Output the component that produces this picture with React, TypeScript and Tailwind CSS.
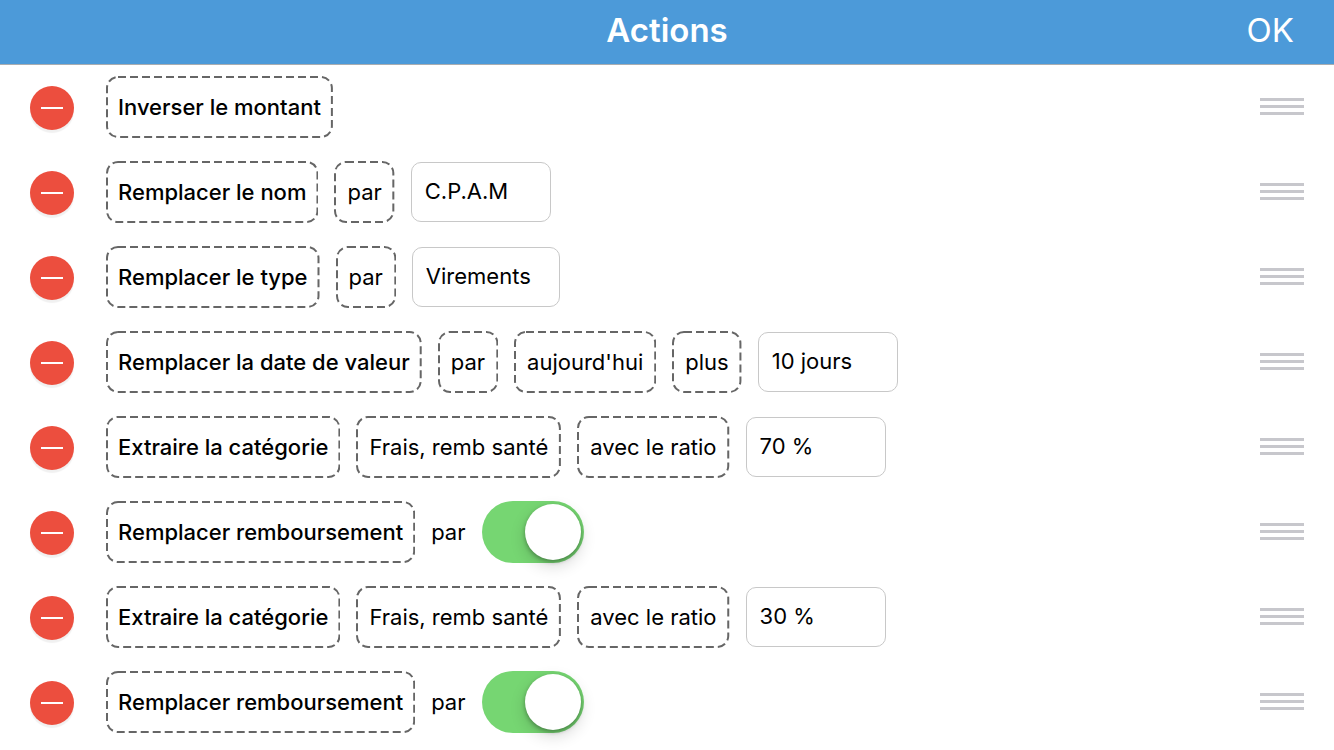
import { useState } from "react";
import type { ReactNode } from "react";
import clsx from "clsx";

type Part =
  | { kind: "choice"; text: string }
  | { kind: "word"; text: string }
  | { kind: "plain"; text: string }
  | { kind: "field"; text: string; label: string }
  | { kind: "toggle"; label: string };

type Action = { id: number; name: string; parts: Part[] };

const initialActions: Action[] = [
  { id: 1, name: "Inverser le montant", parts: [] },
  {
    id: 2,
    name: "Remplacer le nom",
    parts: [
      { kind: "word", text: "par" },
      { kind: "field", text: "C.P.A.M", label: "Nom" },
    ],
  },
  {
    id: 3,
    name: "Remplacer le type",
    parts: [
      { kind: "word", text: "par" },
      { kind: "field", text: "Virements", label: "Type" },
    ],
  },
  {
    id: 4,
    name: "Remplacer la date de valeur",
    parts: [
      { kind: "word", text: "par" },
      { kind: "choice", text: "aujourd'hui" },
      { kind: "choice", text: "plus" },
      { kind: "field", text: "10 jours", label: "Durée" },
    ],
  },
  {
    id: 5,
    name: "Extraire la catégorie",
    parts: [
      { kind: "choice", text: "Frais, remb santé" },
      { kind: "word", text: "avec le ratio" },
      { kind: "field", text: "70 %", label: "Ratio" },
    ],
  },
  {
    id: 6,
    name: "Remplacer remboursement",
    parts: [
      { kind: "plain", text: "par" },
      { kind: "toggle", label: "Remboursement" },
    ],
  },
  {
    id: 7,
    name: "Extraire la catégorie",
    parts: [
      { kind: "choice", text: "Frais, remb santé" },
      { kind: "word", text: "avec le ratio" },
      { kind: "field", text: "30 %", label: "Ratio" },
    ],
  },
  {
    id: 8,
    name: "Remplacer remboursement",
    parts: [
      { kind: "plain", text: "par" },
      { kind: "toggle", label: "Remboursement" },
    ],
  },
];

const chipClass = "relative flex h-[62px] shrink-0 items-center whitespace-nowrap";

// CSS dashed borders can't set the dash length, so the outline is a stroked rect
function DashedOutline() {
  return (
    <svg className="pointer-events-none absolute inset-0 size-full" aria-hidden="true">
      <rect
        x="1"
        y="1"
        rx="11"
        className="h-[calc(100%-2px)] w-[calc(100%-2px)]"
        fill="none"
        stroke="#666666"
        strokeWidth="2"
        strokeDasharray="8 4"
      />
    </svg>
  );
}

function ChoiceChip({ children, strong }: { children: ReactNode; strong?: boolean }) {
  return (
    <button type="button" className={clsx(chipClass, strong ? "px-3 font-medium" : "px-[13px]")}>
      <DashedOutline />
      {children}
    </button>
  );
}

function WordChip({ children }: { children: ReactNode }) {
  return (
    <span className={clsx(chipClass, "px-[13px]")}>
      <DashedOutline />
      {children}
    </span>
  );
}

function Toggle({ label }: { label: string }) {
  const [on, setOn] = useState(true);
  return (
    <label className="relative block h-[62px] w-[102px] shrink-0 cursor-pointer">
      <input
        type="checkbox"
        role="switch"
        aria-label={label}
        checked={on}
        onChange={(event) => setOn(event.target.checked)}
        className="block size-full cursor-pointer appearance-none rounded-full bg-[#e5e5ea] transition-colors checked:bg-[#76d672]"
      />
      <span
        className={clsx(
          "pointer-events-none absolute top-[3px] size-14 rounded-full bg-white shadow-[0_6px_16px_rgba(0,0,0,.16),0_2px_4px_rgba(0,0,0,.3)] transition-all",
          on ? "right-[3px]" : "right-[43px]",
        )}
      />
    </label>
  );
}

function ActionPart({ part }: { part: Part }) {
  switch (part.kind) {
    case "choice":
      return <ChoiceChip>{part.text}</ChoiceChip>;
    case "word":
      return <WordChip>{part.text}</WordChip>;
    case "plain":
      return <span className="shrink-0">{part.text}</span>;
    case "field":
      return (
        <input
          type="text"
          aria-label={part.label}
          defaultValue={part.text}
          className="field-sizing-content h-[60px] min-w-[140px] shrink-0 rounded-[10px] border border-[#c8c8c8] bg-white pr-7 pb-[3px] pl-[13px] outline-none focus:border-[#4c9ad9]"
        />
      );
    case "toggle":
      return <Toggle label={part.label} />;
  }
}

function ActionRow({ action, onRemove }: { action: Action; onRemove: () => void }) {
  return (
    <li className="flex h-[85px] items-center px-[30px] pb-px">
      <button
        type="button"
        aria-label={`Supprimer ${action.name}`}
        onClick={onRemove}
        className="mt-0.5 mr-8 grid size-11 shrink-0 place-items-center rounded-full bg-[#ec4e3e] shadow-[0_3px_1px_rgba(0,0,0,.06)]"
      >
        <span className="h-0.5 w-[22px] bg-white" />
      </button>

      <div className="flex min-w-0 flex-1 items-center gap-4">
        <ChoiceChip strong>{action.name}</ChoiceChip>
        {action.parts.map((part, index) => (
          <ActionPart key={index} part={part} />
        ))}
      </div>

      <button type="button" aria-label={`Déplacer ${action.name}`} className="mb-px flex w-11 shrink-0 cursor-grab flex-col gap-1">
        <span className="h-[3px] w-full bg-[#c7c7cc]" />
        <span className="h-[3px] w-full bg-[#c7c7cc]" />
        <span className="h-[3px] w-full bg-[#c7c7cc]" />
      </button>
    </li>
  );
}

export default function App() {
  const [actions, setActions] = useState(initialActions);

  return (
    <div className="min-h-screen bg-white font-['Inter','Liberation_Sans',sans-serif] text-[22px] leading-7 text-black">
      <header className="grid h-[65px] grid-cols-[1fr_auto_1fr] items-center border-b border-[#a9adb1] bg-[#4c9ad9] px-10 pb-1 text-[33px] leading-10 text-white">
        <h1 className="col-start-2 font-semibold">Actions</h1>
        <button type="button" className="justify-self-end">
          OK
        </button>
      </header>

      <ul>
        {actions.map((action) => (
          <ActionRow
            key={action.id}
            action={action}
            onRemove={() => setActions((list) => list.filter((item) => item.id !== action.id))}
          />
        ))}
      </ul>
    </div>
  );
}
